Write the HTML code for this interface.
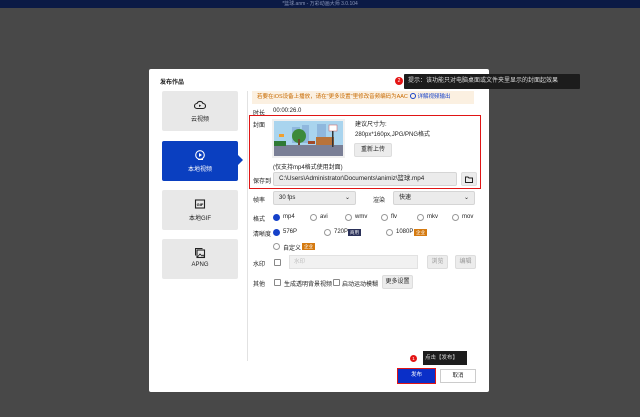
<!DOCTYPE html>
<html><head><meta charset="utf-8"><style>
*{box-sizing:border-box;margin:0;padding:0}
body{width:640px;height:417px;background:#484848;position:relative;overflow:hidden;font-family:"Liberation Sans","Noto Sans CJK SC",sans-serif;font-size:6px;color:#222}
.a{position:absolute}
.top{left:0;top:0;width:640px;height:8px;background:#0b1a45;color:#8895b8;font-size:5px;text-align:center;line-height:8px}
.dlg{left:149px;top:69px;width:340px;height:323px;background:#fff;border-radius:2px}
.tab{left:162px;width:76px;height:40px;background:#e8e8e8;border-radius:2px;text-align:center;font-size:6px;color:#222}
.tab svg{display:block;margin:8px auto 3px}
.lbl{font-size:6px;color:#222}
.sel{background:#ebebeb;border:1px solid #d5d5d5;border-radius:2px;height:14px;font-size:6px;line-height:12px;padding-left:5px}
.btn{background:#ececec;border:1px solid #ddd;border-radius:2px;font-size:6px;text-align:center;line-height:12px}
.rad{width:7px;height:7px;border:1px solid #999;border-radius:50%}
.chk{width:7px;height:7px;border-radius:50%;background:#1641c9}
.box{width:7px;height:7px;border:1px solid #888;border-radius:1px}
.tag{font-size:4.5px;color:#fff;padding:0 2px;line-height:7px}
</style></head><body>
<div class="a top">*篮球.anm - 万彩动画大师 3.0.104</div>
<div class="a dlg"></div>
<div class="a" style="left:160px;top:77px;font-size:6px;font-weight:bold">发布作品</div>

<div class="a tab" style="top:91px"><svg width="12" height="12" viewBox="0 0 12 12"><path d="M3 9.5a2.5 2.5 0 0 1 0-5 3.2 3.2 0 0 1 6 0 2.5 2.5 0 0 1 0 5z" fill="none" stroke="#222" stroke-width="1.1"/><path d="M5 5.5l2.2 1.3L5 8z" fill="#222"/></svg>云视频</div>
<div class="a tab" style="top:141px;background:#0a3fc0;color:#fff"><svg width="12" height="12" viewBox="0 0 12 12"><circle cx="6" cy="6" r="4.3" fill="none" stroke="#fff" stroke-width="1.1"/><path d="M5 4l3 2-3 2z" fill="#fff"/><path d="M4 10.5h5" stroke="#fff"/></svg>本地视频</div>
<div class="a" style="left:238px;top:155px;width:0;height:0;border-top:5px solid transparent;border-bottom:5px solid transparent;border-left:5px solid #0a3fc0"></div>
<div class="a tab" style="top:190px"><svg width="12" height="12" viewBox="0 0 12 12"><rect x="1.5" y="2" width="9" height="8" fill="none" stroke="#222" stroke-width="1.1"/><text x="6" y="7.8" font-size="4" text-anchor="middle" font-family="Liberation Sans" font-weight="bold">GIF</text></svg>本地GIF</div>
<div class="a tab" style="top:239px"><svg width="12" height="12" viewBox="0 0 12 12"><rect x="3" y="3" width="7.5" height="7.5" fill="none" stroke="#222" stroke-width="1.1"/><path d="M1.5 8.5V1.5h7" fill="none" stroke="#222"/><path d="M3.5 10l2.5-3 2 2 1-1 1.5 2" fill="none" stroke="#222" stroke-width=".8"/></svg>APNG</div>
<div class="a" style="left:247px;top:91px;width:1px;height:270px;background:#e2e2e2"></div>

<div class="a" style="left:252px;top:91px;width:222px;height:13px;background:#fbf0e1;color:#c86a00;font-size:5.5px;line-height:13px;padding-left:5px">若要在iOS设备上播放，请在"更多设置"里修改音频编码为AAC<span style="color:#1641c9;position:absolute;left:158px"><span style="display:inline-block;width:6px;height:6px;border:1px solid #1641c9;border-radius:50%;vertical-align:-1px"></span> 详解视频输出</span></div>
<div class="a" style="left:395px;top:77px;width:8px;height:8px;border-radius:50%;background:#e41414;color:#fff;font-size:5px;text-align:center;line-height:8px">2</div>
<div class="a" style="left:404px;top:74px;width:176px;height:15px;background:#1c1c1c;color:#ddd;font-size:6px;line-height:15px;padding-left:4px;border-radius:1px">提示：该功能只对电脑桌面或文件夹里显示的封面起效果</div>

<div class="a lbl" style="left:253px;top:108px">时长</div>
<div class="a lbl" style="left:273px;top:108px">00:00:26.0</div>
<div class="a" style="left:249px;top:115px;width:232px;height:74px;border:1.5px solid #e01515"></div>
<div class="a lbl" style="left:253px;top:120px">封面</div>
<svg class="a" style="left:272px;top:119px" width="73" height="39" viewBox="0 0 73 39"><rect width="73" height="39" fill="#f0f0f0"/><rect x="2" y="2" width="69" height="35" fill="#a9d4ee"/><rect x="20" y="8" width="8" height="16" fill="#8fb7dd"/><rect x="30" y="6" width="7" height="18" fill="#8fb7dd"/><rect x="45" y="5" width="9" height="19" fill="#8fb7dd"/><rect x="2" y="26" width="69" height="11" fill="#7a7f96"/><circle cx="27" cy="17" r="7" fill="#3d8a3a"/><rect x="26" y="20" width="2" height="6" fill="#6b4a2a"/><rect x="44" y="18" width="18" height="8" fill="#b8733a"/><rect x="57" y="6" width="8" height="6" fill="#fff" stroke="#c55" stroke-width=".5"/><rect x="60" y="12" width="1.5" height="16" fill="#333"/><rect x="7" y="15" width="5" height="3" fill="#f0a030"/><rect x="36" y="22" width="7" height="3" fill="#a04a2a"/><rect x="2" y="22" width="12" height="5" fill="#2f7a35"/></svg>
<div class="a lbl" style="left:355px;top:119px">建议尺寸为:</div>
<div class="a lbl" style="left:355px;top:129px">280px*160px,JPG/PNG格式</div>
<div class="a btn" style="left:354px;top:143px;width:38px;height:14px">重新上传</div>
<div class="a lbl" style="left:273px;top:162px">(仅支持mp4格式使用封面)</div>
<div class="a lbl" style="left:253px;top:176px">保存到</div>
<div class="a sel" style="left:273px;top:172px;width:184px;font-size:6.3px">C:\Users\Administrator\Documents\animiz\篮球.mp4</div>
<div class="a btn" style="left:461px;top:172px;width:16px;height:14px"><svg width="8" height="7" viewBox="0 0 8 7" style="margin-top:3px"><path d="M.5 1h2.5l1 1h3.5v4.5h-7z" fill="none" stroke="#222"/></svg></div>

<div class="a lbl" style="left:253px;top:195px">帧率</div>
<div class="a sel" style="left:273px;top:191px;width:83px">30 fps<span style="position:absolute;right:5px">⌄</span></div>
<div class="a lbl" style="left:373px;top:195px">渲染</div>
<div class="a sel" style="left:393px;top:191px;width:82px">快速<span style="position:absolute;right:5px">⌄</span></div>

<div class="a lbl" style="left:253px;top:214px">格式</div>
<div class="a chk" style="left:273px;top:214px"></div><div class="a lbl" style="left:283px;top:214px">mp4</div>
<div class="a rad" style="left:310px;top:214px"></div><div class="a lbl" style="left:320px;top:214px">avi</div>
<div class="a rad" style="left:345px;top:214px"></div><div class="a lbl" style="left:355px;top:214px">wmv</div>
<div class="a rad" style="left:381px;top:214px"></div><div class="a lbl" style="left:391px;top:214px">flv</div>
<div class="a rad" style="left:417px;top:214px"></div><div class="a lbl" style="left:427px;top:214px">mkv</div>
<div class="a rad" style="left:452px;top:214px"></div><div class="a lbl" style="left:462px;top:214px">mov</div>

<div class="a lbl" style="left:253px;top:229px">清晰度</div>
<div class="a chk" style="left:273px;top:229px"></div><div class="a lbl" style="left:283px;top:229px">576P</div>
<div class="a rad" style="left:324px;top:229px"></div><div class="a lbl" style="left:334px;top:229px">720P</div><div class="a tag" style="left:348px;top:229px;background:#2b3159">商用</div>
<div class="a rad" style="left:386px;top:229px"></div><div class="a lbl" style="left:396px;top:229px">1080P</div><div class="a tag" style="left:414px;top:229px;background:#d57a10">企业</div>
<div class="a rad" style="left:273px;top:243px"></div><div class="a lbl" style="left:283px;top:243px">自定义</div><div class="a tag" style="left:302px;top:243px;background:#d57a10">企业</div>

<div class="a lbl" style="left:253px;top:259px">水印</div>
<div class="a box" style="left:274px;top:259px"></div>
<div class="a" style="left:289px;top:255px;width:129px;height:14px;background:#f1f1f1;border:1px solid #e2e2e2;font-size:5.5px;color:#bbb;line-height:12px;padding-left:4px">水印</div>
<div class="a btn" style="left:427px;top:255px;width:21px;height:14px;color:#999">浏览</div>
<div class="a btn" style="left:455px;top:255px;width:21px;height:14px;color:#999">编辑</div>

<div class="a lbl" style="left:253px;top:279px">其他</div>
<div class="a box" style="left:274px;top:279px"></div><div class="a lbl" style="left:284px;top:279px">生成透明背景视频</div>
<div class="a box" style="left:333px;top:279px"></div><div class="a lbl" style="left:342px;top:279px">启动运动模糊</div>
<div class="a btn" style="left:382px;top:275px;width:31px;height:14px">更多设置</div>

<div class="a" style="left:410px;top:355px;width:7px;height:7px;border-radius:50%;background:#e41414;color:#fff;font-size:4.5px;text-align:center;line-height:7px">1</div>
<div class="a" style="left:423px;top:351px;width:44px;height:14px;background:#1c1c1c;color:#ddd;font-size:5.5px;line-height:14px;padding-left:2px">点击【发布】</div>
<div class="a" style="left:397px;top:368px;width:39px;height:16px;border:1.5px solid #e01515;background:#0a2fc8;color:#fff;font-size:5.5px;text-align:center;line-height:13px">发布</div>
<div class="a" style="left:440px;top:369px;width:36px;height:14px;border:1px solid #ccc;background:#fff;font-size:5.5px;text-align:center;line-height:12px">取消</div>
</body></html>
